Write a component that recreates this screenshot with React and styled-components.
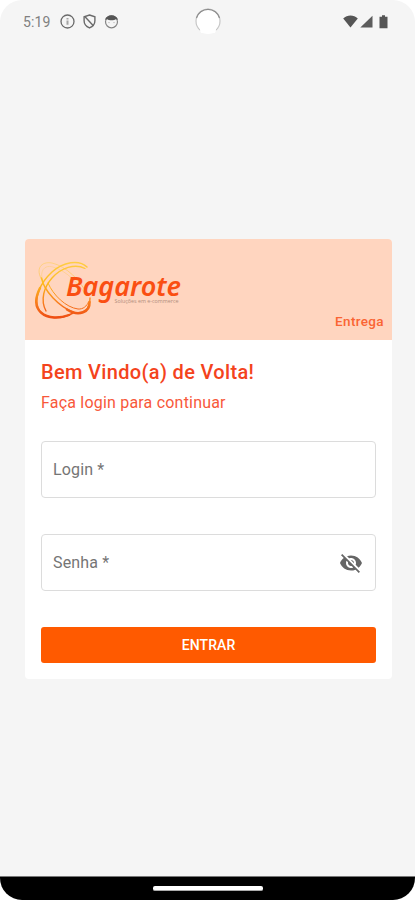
import React, { useState } from 'react';
import styled, { createGlobalStyle } from 'styled-components';

const App = () => {
    const [visible, setVisible] = useState(false);
    return (
        <Phone>
            <GlobalStyle />
            <StatusBar>
                <Notifications>
                    <Clock>5:19</Clock>
                    <InfoIcon />
                    <ShieldIcon />
                    <FaceIcon />
                </Notifications>
                <CameraIcon />
                <System>
                    <WifiIcon />
                    <SignalIcon />
                    <BatteryIcon />
                </System>
            </StatusBar>
            <Main>
                <Card>
                    <CardHeader>
                        <Logo />
                        <Module>Entrega</Module>
                    </CardHeader>
                    <Form onSubmit={(e) => e.preventDefault()}>
                        <Title>Bem Vindo(a) de Volta!</Title>
                        <Subtitle>Faça login para continuar</Subtitle>
                        <Field>
                            <Input type="text" placeholder="Login *" />
                        </Field>
                        <Field>
                            <Input type={visible ? 'text' : 'password'} placeholder="Senha *" />
                            <EyeButton type="button" aria-label="Mostrar senha" onClick={() => setVisible(!visible)}>
                                <EyeOffIcon />
                            </EyeButton>
                        </Field>
                        <Submit type="submit">ENTRAR</Submit>
                    </Form>
                </Card>
            </Main>
            <NavBar>
                <Handle />
            </NavBar>
        </Phone>
    )
}

const InfoIcon = () => (
    <svg width="15" height="15" viewBox="0 0 15 15" fill="none" stroke="#6a6a6a">
        <circle cx="7.5" cy="7.5" r="6.5" strokeWidth="1.3" />
        <path d="M7.5 4v1.4M7.5 6.6v4.2" stroke="#a5a5a5" strokeWidth="2" />
    </svg>
)

const ShieldIcon = () => (
    <svg width="13" height="15" viewBox="0 0 13 15" fill="none" stroke="#6a6a6a" strokeWidth="1.4">
        <path d="M6.5 1 L11.9 2.8 V6.8 C11.9 10.1 9.6 12.7 6.5 13.9 C3.4 12.7 1.1 10.1 1.1 6.8 V2.8 Z" />
        <path d="M2 2.7 L10.6 11.9" />
    </svg>
)

const FaceIcon = () => (
    <svg width="15" height="15" viewBox="0 0 15 15">
        <circle cx="7.5" cy="7.8" r="6" fill="none" stroke="#858585" strokeWidth="1.2" />
        <path d="M1 5.8 C2.4 -0.4 12.6 -0.4 14 5.8 L11.6 5.2 C10.6 6.6 4.4 6.6 3.4 5.2Z" fill="#555" />
        <path d="M4.5 8.6h1M9.5 8.6h1" stroke="#aaa" />
    </svg>
)

const CameraIcon = () => (
    <svg width="28" height="30" viewBox="0 0 28 30">
        <circle cx="14" cy="15" r="12" fill="#fff" />
        <path d="M6.4 23.4 A12 12 0 0 1 2 14 A12 12 0 0 1 26 14 A12 12 0 0 1 21.6 23.4" fill="none" stroke="#c6c6c6" strokeWidth="1.2" />
        <path d="M2.5 11 A12 12 0 0 1 25.5 11" fill="none" stroke="#8c8c8c" strokeWidth="1.2" />
        <path d="M5 19 h18 l-2 7 h-14z" fill="#fff" />
    </svg>
)

const WifiIcon = () => (
    <svg width="15" height="13" viewBox="0 0 15 13">
        <path d="M0.2 3.6 C4.2 -0.4 10.8 -0.4 14.8 3.6 L7.5 12.4Z" fill="#555" />
    </svg>
)

const SignalIcon = () => (
    <svg width="13" height="13" viewBox="0 0 13 13">
        <path d="M12.5 0.7 V12.4 H0.3Z" fill="#5c5c5c" />
    </svg>
)

const BatteryIcon = () => (
    <svg width="9" height="14" viewBox="0 0 9 14">
        <path d="M3 0.3h3v1.4h2.5v11.6h-8v-11.6H3z" fill="#555" />
    </svg>
)

const EyeOffIcon = () => (
    <svg width="24" height="24" viewBox="0 0 24 24" fill="#666">
        <path d="M12 7c2.76 0 5 2.24 5 5 0 .65-.13 1.26-.36 1.83l2.92 2.92c1.51-1.26 2.7-2.89 3.43-4.75-1.73-4.39-6-7.5-11-7.5-1.4 0-2.74.25-3.98.7l2.16 2.16C10.74 7.13 11.35 7 12 7zM2 4.27l2.28 2.28.46.46C3.08 8.3 1.78 10.02 1 12c1.73 4.39 6 7.5 11 7.5 1.55 0 3.03-.3 4.38-.84l.42.42L19.73 22 21 20.73 3.27 3 2 4.27zM7.53 9.8l1.55 1.55c-.05.21-.08.43-.08.65 0 1.66 1.34 3 3 3 .22 0 .44-.03.65-.08l1.55 1.55c-.67.33-1.41.53-2.2.53-2.76 0-5-2.24-5-5 0-.79.2-1.53.53-2.2zm4.31-.78l3.15 3.15.02-.16c0-1.66-1.34-3-3-3l-.17.01z" />
    </svg>
)

const Logo = () => (
    <LogoSvg width="150" height="64" viewBox="35 258 150 64">
        <defs>
            <linearGradient id="flame" gradientUnits="userSpaceOnUse" x1="0" y1="260" x2="0" y2="318">
                <stop offset="0" stopColor="#ffd04a" />
                <stop offset="0.4" stopColor="#fdb91c" />
                <stop offset="0.75" stopColor="#f87a1c" />
                <stop offset="1" stopColor="#ee4d14" />
            </linearGradient>
        </defs>
        <g fill="none" stroke="url(#flame)" strokeLinecap="round">
            <path d="M87 267 C79 259 63 262 52 272 C40 283 34 298 38 308 C42 318 59 321 73 313" strokeWidth="1.5" />
            <path d="M40 288 C35 298 35 307 41 312.500 C48 319 60 318.500 69 315" strokeWidth="2.4" />
            <path d="M85 268.500 C75 263 61 268 52 278 C44 287 40 300 46 311" strokeWidth="1.4" />
            <path d="M41.500 278 C44 291 59 307 74 312.500 C84 315.500 90 309 90 298" strokeWidth="1.4" />
            <path d="M67 309.500 C79 317 90 312 89.500 302" strokeWidth="2.6" />
            <path d="M48 283 C53 295 66 307.500 78 309 C83 309.500 87 306 88.500 302" strokeWidth="1" />
            <path d="M42 280 C35 269 41 261 52 263 C66 266 81 281 87 294" strokeWidth="0.5" />
            <path d="M43 281 C39 272 44 264 53 267 C67 271 79 284 85 294" strokeWidth="0.3" />
        </g>
        <text x="66" y="295.500" textLength="115" lengthAdjust="spacingAndGlyphs" fontFamily="'Noto Sans', sans-serif" fontSize="26.500" fontWeight="600" fontStyle="italic" fill="#fa4f12">Bagarote</text>
        <text x="114.500" y="303.300" textLength="64" lengthAdjust="spacingAndGlyphs" fontFamily="'Open Sans', sans-serif" fontSize="5" fill="#b08d7d">Soluções em e-commerce</text>
    </LogoSvg>
)

const GlobalStyle = createGlobalStyle`
    *{
        box-sizing: border-box;
    }
    body{
        margin: 0;
        background: #fff;
        font-family: Roboto, sans-serif;
    }
    svg{
        display: block;
        flex-shrink: 0;
    }
`;

const Phone = styled.div`
    display: flex;
    flex-direction: column;
    width: 415px;
    height: 900px;
    overflow: hidden;
    background: #f5f5f5;
    border-radius: 22px;
`;

const StatusBar = styled.header`
    display: grid;
    grid-template-columns: 1fr 28px 1fr;
    align-items: center;
    height: 43px;
    padding: 0 22px 0 23px;
`;

const Notifications = styled.div`
    display: flex;
    align-items: center;
    gap: 8px;
`;

const Clock = styled.span`
    width: 29px;
    font-size: 14px;
    line-height: 16px;
    letter-spacing: 0.1px;
    color: #808080;
`;

const System = styled.div`
    display: flex;
    align-items: center;
    justify-content: flex-end;
    gap: 2px;
    padding-right: 5px;
    svg:last-child{
        margin-left: 4px;
    }
`;

const Main = styled.main`
    flex: 1;
    padding: 196px 23px 0 25px;
`;

const Card = styled.section`
    height: 440px;
    background: #fff;
    border-radius: 4px;
    overflow: hidden;
`;

const CardHeader = styled.div`
    display: flex;
    justify-content: space-between;
    align-items: flex-end;
    height: 101px;
    padding: 0 8px 10px 10px;
    background: #ffd5bf;
`;

const LogoSvg = styled.svg`
    margin-bottom: 8px;
`;

const Module = styled.span`
    font-size: 13.5px;
    font-weight: 500;
    line-height: 18px;
    letter-spacing: 0.35px;
    color: #fa6433;
`;

const Form = styled.form`
    display: flex;
    flex-direction: column;
    padding: 20px 16px 16px;
`;

const Title = styled.h1`
    margin: 0;
    font-size: 20px;
    font-weight: 500;
    line-height: 24px;
    letter-spacing: 0.34px;
    color: #f4431c;
`;

const Subtitle = styled.p`
    margin: 8px 0 28px;
    font-size: 16px;
    line-height: 21px;
    letter-spacing: 0.2px;
    color: #f8583a;
`;

const Field = styled.div`
    display: flex;
    align-items: center;
    height: 57px;
    margin-bottom: 36px;
    padding: 0 12px 0 11px;
    border: 1px solid #dcdcdc;
    border-radius: 4px;
`;

const Input = styled.input`
    flex: 1;
    min-width: 0;
    padding: 0;
    border: none;
    outline: none;
    background: none;
    font-family: inherit;
    font-size: 16px;
    letter-spacing: 0.15px;
    color: #333;
    &::placeholder{
        color: #757575;
        opacity: 1;
    }
`;

const EyeButton = styled.button`
    padding: 0;
    border: none;
    background: none;
    cursor: pointer;
`;

const Submit = styled.button`
    height: 36px;
    padding: 0;
    border: none;
    border-radius: 3px;
    background: #ff5a00;
    font-family: inherit;
    font-size: 14px;
    font-weight: 500;
    letter-spacing: 0.1px;
    color: #fff;
    cursor: pointer;
`;

const NavBar = styled.footer`
    display: flex;
    justify-content: center;
    height: 24px;
    padding-top: 9px;
    border-top: 1px solid #777;
    background: #000;
`;

const Handle = styled.div`
    width: 110px;
    height: 5px;
    border: solid #aaa;
    border-width: 0 0 1px;
    border-radius: 2px;
    background: #fff;
`;

export default App;
